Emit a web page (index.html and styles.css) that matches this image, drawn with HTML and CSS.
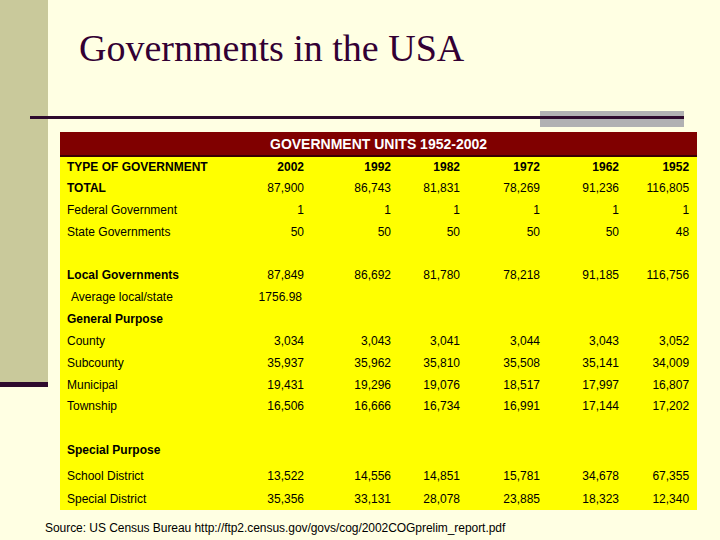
FILE: index.html
```html
<!DOCTYPE html>
<html lang="en">
<head>
<meta charset="utf-8">
<title>Governments in the USA</title>
<link rel="stylesheet" href="styles.css">
</head>
<body>
<div class="slide">
  <h1 class="title">Governments in the USA</h1>
  <div class="rule">
    <div class="rule-line"></div>
    <div class="rule-block"></div>
  </div>
  <table class="units">
    <colgroup>
      <col class="c-label"><col class="c-2002"><col class="c-1992"><col class="c-1982"><col class="c-1972"><col class="c-1962"><col class="c-1952">
    </colgroup>
    <thead>
      <tr class="caption-row"><th colspan="7">GOVERNMENT UNITS 1952-2002</th></tr>
    </thead>
    <tbody>
      <tr class="head-row"><th class="lbl">TYPE OF GOVERNMENT</th><th>2002</th><th>1992</th><th>1982</th><th>1972</th><th>1962</th><th>1952</th></tr>
      <tr><td class="lbl b">TOTAL</td><td>87,900</td><td>86,743</td><td>81,831</td><td>78,269</td><td>91,236</td><td>116,805</td></tr>
      <tr><td class="lbl">Federal Government</td><td>1</td><td>1</td><td>1</td><td>1</td><td>1</td><td>1</td></tr>
      <tr><td class="lbl">State Governments</td><td>50</td><td>50</td><td>50</td><td>50</td><td>50</td><td>48</td></tr>
      <tr><td class="lbl"></td><td></td><td></td><td></td><td></td><td></td><td></td></tr>
      <tr><td class="lbl b">Local Governments</td><td>87,849</td><td>86,692</td><td>81,780</td><td>78,218</td><td>91,185</td><td>116,756</td></tr>
      <tr><td class="lbl indent">Average local/state</td><td class="avg">1756.98</td><td></td><td></td><td></td><td></td><td></td></tr>
      <tr><td class="lbl b">General Purpose</td><td></td><td></td><td></td><td></td><td></td><td></td></tr>
      <tr><td class="lbl">County</td><td>3,034</td><td>3,043</td><td>3,041</td><td>3,044</td><td>3,043</td><td>3,052</td></tr>
      <tr><td class="lbl">Subcounty</td><td>35,937</td><td>35,962</td><td>35,810</td><td>35,508</td><td>35,141</td><td>34,009</td></tr>
      <tr><td class="lbl">Municipal</td><td>19,431</td><td>19,296</td><td>19,076</td><td>18,517</td><td>17,997</td><td>16,807</td></tr>
      <tr><td class="lbl">Township</td><td>16,506</td><td>16,666</td><td>16,734</td><td>16,991</td><td>17,144</td><td>17,202</td></tr>
      <tr><td class="lbl"></td><td></td><td></td><td></td><td></td><td></td><td></td></tr>
      <tr class="sp-row"><td class="lbl b">Special Purpose</td><td></td><td></td><td></td><td></td><td></td><td></td></tr>
      <tr class="last"><td class="lbl">School District</td><td>13,522</td><td>14,556</td><td>14,851</td><td>15,781</td><td>34,678</td><td>67,355</td></tr>
      <tr class="last"><td class="lbl">Special District</td><td>35,356</td><td>33,131</td><td>28,078</td><td>23,885</td><td>18,323</td><td>12,340</td></tr>
    </tbody>
  </table>
  <p class="source">Source: US Census Bureau http://ftp2.census.gov/govs/cog/2002COGprelim_report.pdf</p>
</div>
</body>
</html>
```

FILE: styles.css
```css
html, body {
  margin: 0;
  padding: 0;
}

body {
  width: 720px;
  height: 540px;
  overflow: hidden;
  background:
    linear-gradient(#c9c99b, #c9c99b) 0 0 / 48px 382px no-repeat,
    linear-gradient(#2e0a2e, #2e0a2e) 0 382px / 48px 5px no-repeat,
    #ffffe3;
  font-family: "Liberation Sans", Arial, sans-serif;
}

.slide {
  display: flex;
  flex-direction: column;
  align-items: flex-start;
}

.title {
  margin: 26px 0 0 79px;
  font-family: "Liberation Serif", "Times New Roman", serif;
  font-weight: normal;
  font-size: 38px;
  line-height: 44px;
  color: #330033;
}

.rule {
  display: flex;
  margin: 41px 0 0 30px;
  width: 654px;
  height: 16px;
}

.rule-line {
  flex: 1;
  height: 3px;
  margin-top: 5px;
  background: #2e0a2e;
}

.rule-block {
  width: 144px;
  height: 16px;
  background: linear-gradient(to bottom, #b1b1b3 0 5px, #2e0a2e 5px 8px, #b1b1b3 8px 16px);
}

.units {
  margin: 5px 0 0 60px;
  width: 637px;
  border-collapse: collapse;
  table-layout: fixed;
  background: #ffff00;
  font-size: 12px;
  color: #000;
}

.c-label { width: 172px; }
.c-2002 { width: 80px; }
.c-1992 { width: 87px; }
.c-1982 { width: 69px; }
.c-1972 { width: 80px; }
.c-1962 { width: 79px; }
.c-1952 { width: 70px; }

.caption-row th {
  background: #800000;
  border-bottom: 2px solid #3a0000;
  color: #ffffff;
  font-size: 14px;
  font-weight: bold;
  height: 23px;
  padding: 0;
  text-align: center;
}

.units td, .head-row th {
  padding: 0 8px 0 0;
  height: 21.85px;
  text-align: right;
  white-space: nowrap;
  line-height: 14px;
}

.head-row th {
  height: 20px;
  font-weight: bold;
}

.units .lbl {
  text-align: left;
  padding-left: 7px;
}

.units .b {
  font-weight: bold;
}

.units .indent {
  padding-left: 11px;
}

.units .avg {
  padding-right: 10px;
}

.units .sp-row td {
  height: 22px;
  vertical-align: top;
  padding-top: 4px;
}

.units .last td {
  height: 22.4px;
}

.source {
  margin: 11px 0 0 45px;
  font-size: 12px;
  letter-spacing: -0.05px;
  line-height: 14px;
  color: #000;
}
```
